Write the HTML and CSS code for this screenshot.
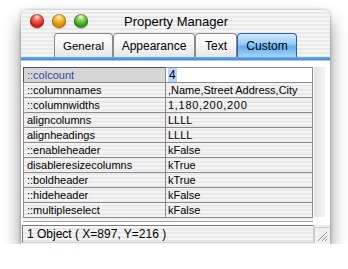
FILE: index.html
```html
<!DOCTYPE html>
<html lang="en">
<head>
    <meta charset="UTF-8">
    <title>Property Manager</title>
    <link rel="stylesheet" href="styles.css">
</head>
<body>
    <div class="window">
        <!-- title bar -->
        <div class="titlebar">
            <div class="lights">
                <span class="light red"></span>
                <span class="light yellow"></span>
                <span class="light green"></span>
            </div>
            <div class="title">Property Manager</div>
        </div>

        <!-- tabs -->
        <div class="tabbar">
            <div class="tab tab-general">General</div>
            <div class="tab tab-appearance">Appearance</div>
            <div class="tab tab-text">Text</div>
            <div class="tab tab-custom active">Custom</div>
        </div>
        <div class="tabline"></div>

        <!-- property list -->
        <div class="content">
            <div class="list">
                <table class="props">
                    <tr class="selected">
                        <td class="name">::colcount</td>
                        <td class="value"><span class="sel">4</span></td>
                    </tr>
                    <tr><td class="name">::columnnames</td><td class="value">,Name,Street Address,City</td></tr>
                    <tr><td class="name">::columnwidths</td><td class="value wide">1,180,200,200</td></tr>
                    <tr><td class="name">aligncolumns</td><td class="value">LLLL</td></tr>
                    <tr><td class="name">alignheadings</td><td class="value">LLLL</td></tr>
                    <tr><td class="name">::enableheader</td><td class="value">kFalse</td></tr>
                    <tr><td class="name">disableresizecolumns</td><td class="value">kTrue</td></tr>
                    <tr><td class="name">::boldheader</td><td class="value">kTrue</td></tr>
                    <tr><td class="name">::hideheader</td><td class="value">kFalse</td></tr>
                    <tr><td class="name">::multipleselect</td><td class="value">kFalse</td></tr>
                </table>
            </div>
            <div class="scroll"></div>
        </div>

        <!-- status bar -->
        <div class="statusbar">
            <div class="status">1 Object ( X=897, Y=216 )</div>
            <div class="grip">
                <svg width="13" height="13" viewBox="0 0 13 13">
                    <path d="M12 3 L3 12 M12 7 L7 12 M12 10 L10 12" stroke="#8a8a8a" stroke-width="1"/>
                    <path d="M12 4 L4 12 M12 8 L8 12" stroke="#ffffff" stroke-width="1"/>
                </svg>
            </div>
        </div>
    </div>
</body>
</html>
```

FILE: styles.css
```css
body {
    margin: 0;
    background: #ffffff;
    font-family: "Liberation Sans", Arial, sans-serif;
    color: #000000;
}

.window {
    margin: 10px 0 0 21px;
    width: 309px;
    height: 234px;
    border-radius: 6px 6px 0 0;
    background: repeating-linear-gradient(to bottom, #f5f5f5 0 2px, #e9e9e9 2px 4px);
    box-shadow: 0 10px 18px rgba(0, 0, 0, 0.45), 0 0 3px rgba(0, 0, 0, 0.35);
    display: flex;
    flex-direction: column;
    overflow: hidden;
}

/* title bar */
.titlebar {
    height: 22px;
    display: flex;
    align-items: center;
    position: relative;
}
.lights {
    display: flex;
    gap: 8px;
    padding-left: 9px;
    padding-top: 1px;
}
.light {
    width: 14px;
    height: 14px;
    border-radius: 50%;
    box-shadow: inset 0 0 0 1px rgba(0, 0, 0, 0.3), 0 1px 1px rgba(0, 0, 0, 0.2);
}
.red {
    background: radial-gradient(circle at 50% 22%, #ffe0d8 0, #f26a58 28%, #d0241a 65%, #e8503c 100%);
}
.yellow {
    background: radial-gradient(circle at 50% 22%, #fff4c8 0, #fac040 28%, #e08a00 65%, #f8b830 100%);
}
.green {
    background: radial-gradient(circle at 50% 22%, #e8ffd8 0, #88d458 28%, #38961a 65%, #64c038 100%);
}
.title {
    position: absolute;
    left: 0;
    right: 0;
    top: 4px;
    text-align: center;
    font-size: 13px;
    padding-left: 1px;
}

/* tabs */
.tabbar {
    height: 25px;
    display: flex;
    align-items: flex-end;
    padding-left: 33px;
}
.tab {
    box-sizing: border-box;
    height: 24px;
    font-size: 12px;
    line-height: 24px;
    text-align: center;
    border: 1px solid #8a8a8a;
    border-bottom: none;
    border-radius: 4px 4px 0 0;
    background: linear-gradient(to bottom, #ffffff 0, #f4f4f4 50%, #e6e6e6 100%);
}
.tab-general {
    width: 59px;
    font-size: 11.5px;
}
.tab-appearance {
    width: 82px;
}
.tab-text {
    width: 42px;
}
.tab-custom {
    width: 60px;
}
.tab.active {
    background: linear-gradient(to bottom, #d0e8fe 0, #94caf6 45%, #62aeee 55%, #a4d6fa 100%);
    border-color: #2c5cac;
}
.tabline {
    height: 3px;
    background: linear-gradient(to bottom, #6aaef0, #3c86dc);
    border-bottom: 1px solid #a8c8ec;
}

/* property list */
.content {
    height: 159px;
    padding: 6px 0 0 2px;
    background: #ffffff;
    display: flex;
}
.list {
    width: 290px;
    background: repeating-linear-gradient(to bottom, #f4f4f4 0 2px, #e9e9e9 2px 4px);
    border-bottom: 1px solid #a0a0a0;
    height: 154px;
}
.props {
    border-collapse: collapse;
    width: 290px;
    font-size: 11px;
}
.props td {
    height: 14px;
    padding: 0 0 0 3px;
    border: 1px solid #8a8a8a;
    line-height: 14px;
    white-space: nowrap;
    overflow: hidden;
}
.props .name {
    width: 138px;
}
.props .value {
    padding-left: 2px;
}
.props .value.wide {
    letter-spacing: 0.7px;
}
.selected .name {
    background: #d6d6d6;
    color: #2a4aa8;
    border-top-color: #505050;
    border-left-color: #505050;
}
.selected .value {
    background: #ffffff;
    font-size: 12px;
}
.sel {
    background: #b8d6fc;
    padding: 0 1px;
}
.scroll {
    width: 11px;
    margin-left: 1px;
    height: 150px;
    background: linear-gradient(to right, #e2e2e2, #f4f4f4);
}

/* status bar */
.statusbar {
    flex: 1;
    display: flex;
    align-items: flex-end;
    padding-left: 1px;
}
.status {
    width: 286px;
    height: 16px;
    margin-bottom: 1px;
    border: 1px solid #7a7a7a;
    border-right-color: #d0d0d0;
    border-bottom-color: #d0d0d0;
    font-size: 12px;
    line-height: 16px;
    padding-left: 4px;
}
.grip {
    width: 15px;
    height: 15px;
    margin-left: auto;
    margin-bottom: 1px;
    border-left: 1px solid #c8c8c8;
    border-top: 1px solid #c8c8c8;
    background: #f0f0f0;
}
```
